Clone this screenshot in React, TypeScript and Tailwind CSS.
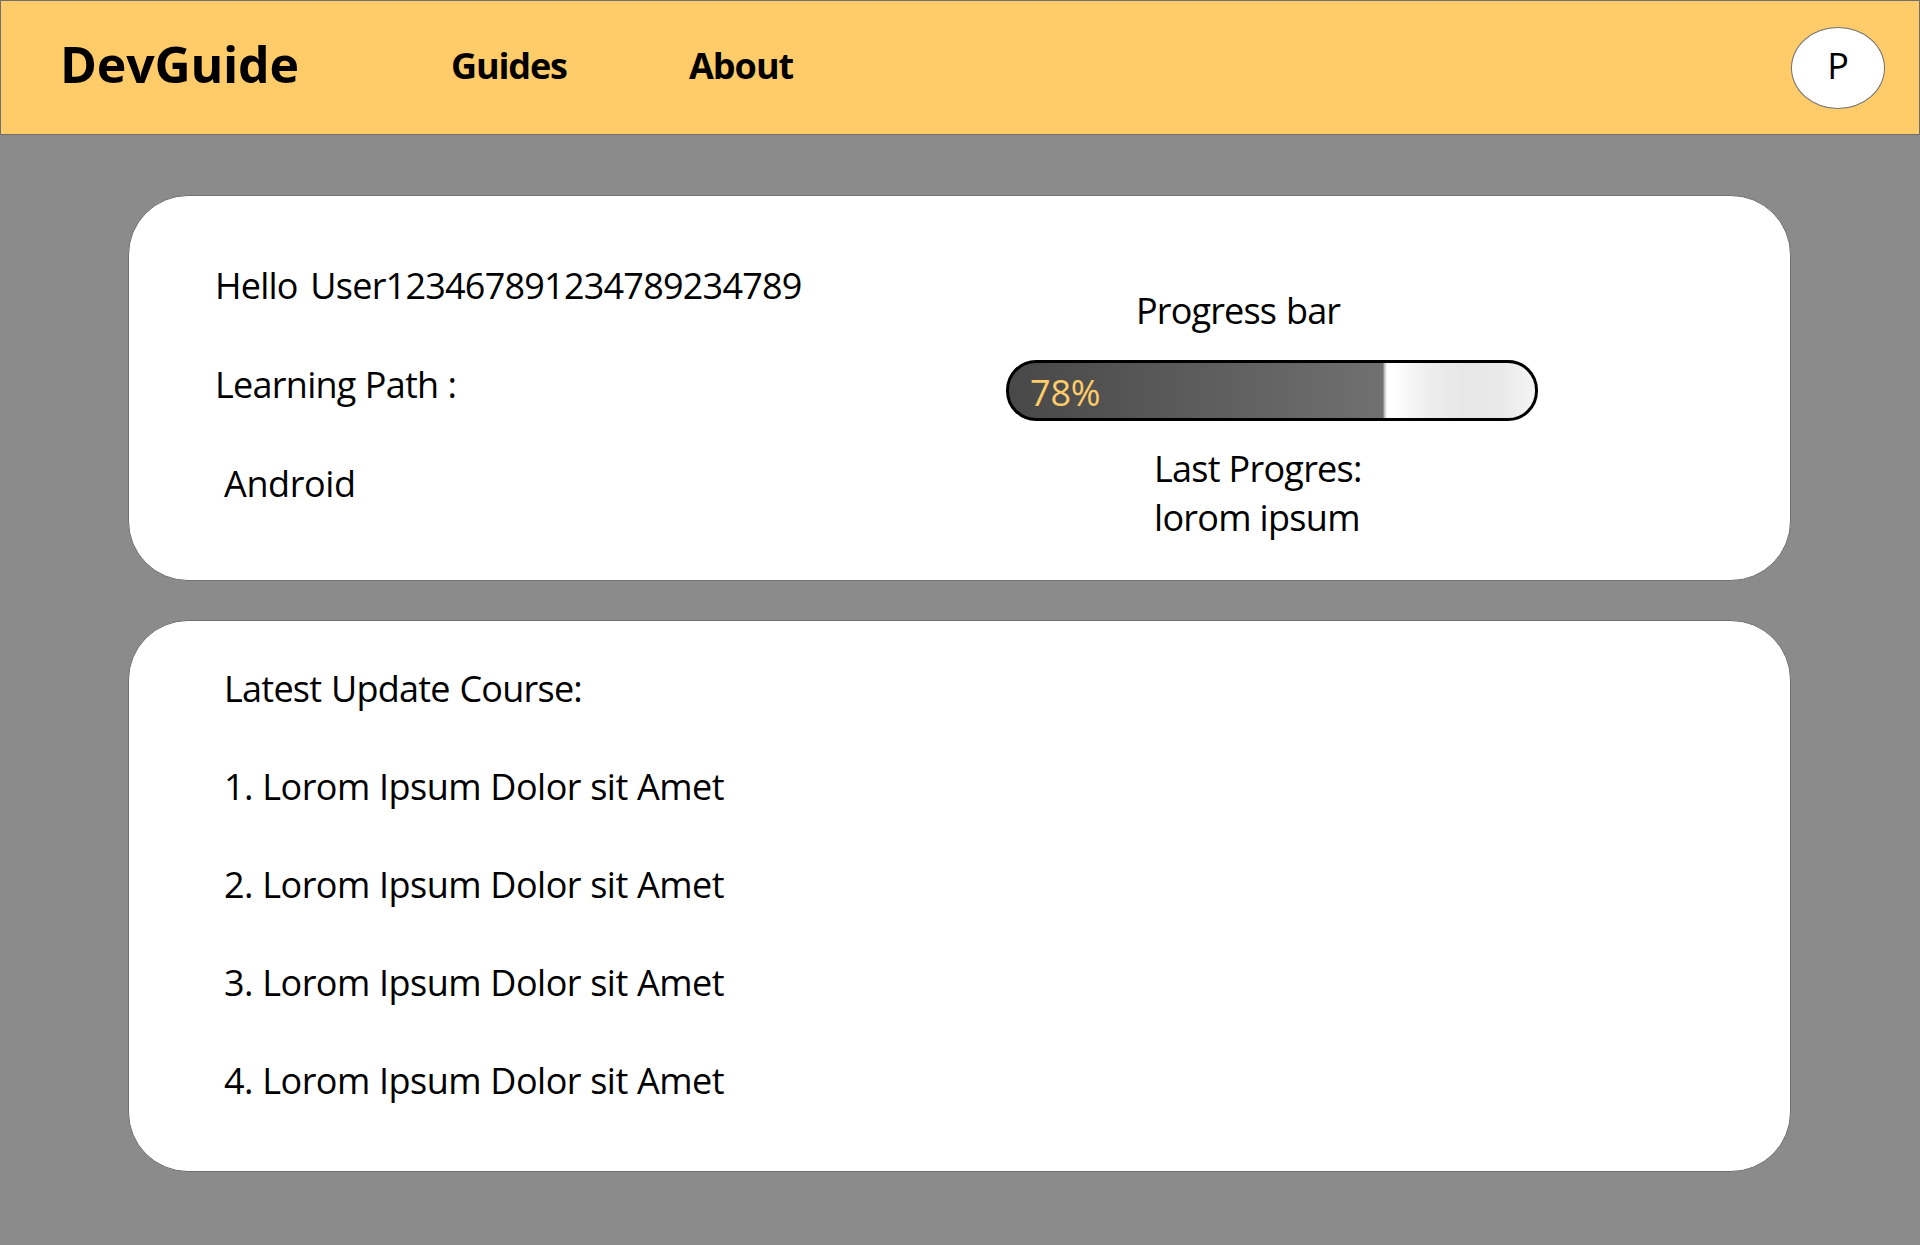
const courses = [
  "1. Lorom Ipsum Dolor sit Amet",
  "2. Lorom Ipsum Dolor sit Amet",
  "3. Lorom Ipsum Dolor sit Amet",
  "4. Lorom Ipsum Dolor sit Amet",
];

function Header() {
  return (
    <header className="flex h-[135px] items-start border border-[#707070] bg-[#ffcc69] pl-[59px] pr-[34px]">
      <div className="mt-[29px] w-[391px] text-[50px] font-bold leading-[68px] tracking-[-0.2px]">DevGuide</div>
      <nav className="mt-[40px] flex font-bold">
        <a className="w-[238px] tracking-[-1.15px]">Guides</a>
        <a className="tracking-[-1px]">About</a>
      </nav>
      <div className="ml-auto mt-[26px] flex h-[82px] w-[94px] justify-center rounded-[50%] border border-[#707070] bg-white pt-[13px]">
        P
      </div>
    </header>
  );
}

function ProgressBar() {
  return (
    <div className="mt-[25px] flex h-[61px] w-[532px] overflow-hidden rounded-[30px] border-[3px] border-black bg-[linear-gradient(to_right,#484848_0px,#707070_374px,#b0b0b0_375px,#ffffff_378px,#ffffff_384px,#eeeeee_418px,#e7e7e7_455px,#e9e9e9_490px,#f5f5f5_526px)] pl-[21px] pt-[5px] tracking-[-0.2px] text-[#ffcc69]">
      78%
    </div>
  );
}

export default function App() {
  return (
    <div className="h-[1245px] w-[1920px] bg-[#8b8b8b] font-['Open_Sans','Noto_Sans',sans-serif] text-[36px] leading-[49px] text-black whitespace-pre">
      <Header />
      <main className="flex flex-col gap-[39px] pl-[128px] pt-[60px]">
        <section className="flex h-[386px] w-[1663px] rounded-[60px] border border-[#707070] bg-white">
          <div className="flex w-[877px] flex-col gap-[50px] pl-[86px] pt-[65px]">
            <p className="tracking-[-0.77px] [word-spacing:4px]">Hello User123467891234789234789</p>
            <p className="tracking-[-0.73px] [word-spacing:0.5px]">Learning Path :</p>
            <p className="pl-[9px] tracking-[-0.38px]">Android</p>
          </div>
          <div className="pt-[90px]">
            <p className="pl-[130px] tracking-[-0.85px] [word-spacing:1.5px]">Progress bar</p>
            <ProgressBar />
            <div className="pl-[148px] pt-[23px]">
              <p className="tracking-[-0.73px]">Last Progres:</p>
              <p className="tracking-[-0.7px]">lorom ipsum</p>
            </div>
          </div>
        </section>
        <section className="flex h-[552px] w-[1663px] flex-col gap-[49px] rounded-[60px] border border-[#707070] bg-white pl-[95px] pt-[43px]">
          <h2 className="tracking-[-0.75px] [word-spacing:1px]">Latest Update Course:</h2>
          {courses.map((course) => (
            <p key={course} className="tracking-[-0.5px] [word-spacing:0.3px]">
              {course}
            </p>
          ))}
        </section>
      </main>
    </div>
  );
}
